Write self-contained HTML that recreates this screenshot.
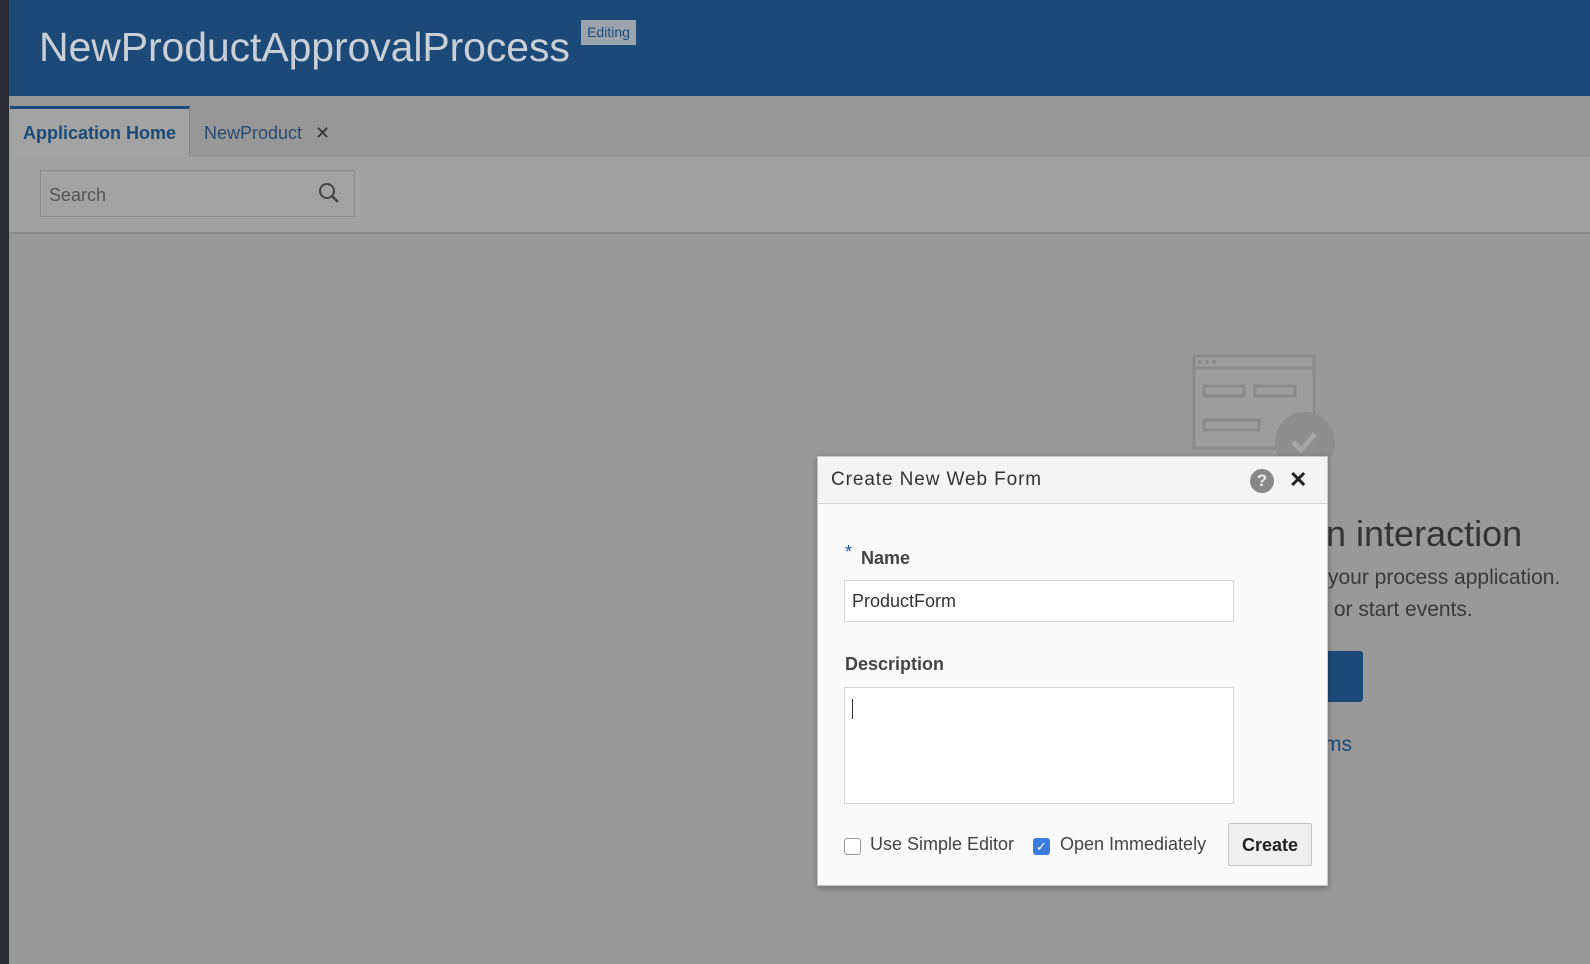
<!DOCTYPE html>
<html><head><meta charset="utf-8"><style>
*{margin:0;padding:0;box-sizing:border-box}
body{width:1590px;height:964px;overflow:hidden;background:#999;font-family:"Liberation Sans",sans-serif;position:relative}
.a{position:absolute}
</style></head><body>
<div class="a" style="left:0;top:0;width:9px;height:964px;background:#2a2a33"></div>
<div class="a" style="left:9px;top:0;width:1581px;height:96px;background:#1c4a78"></div>
<div class="a" style="left:39px;top:24px;font-size:41px;color:#c9cfd6;letter-spacing:-0.1px">NewProductApprovalProcess</div>
<div class="a" style="left:581px;top:20px;width:55px;height:25px;background:#9ba4ad;color:#1c4a78;font-size:14px;text-align:center;line-height:25px">Editing</div>
<div class="a" style="left:9px;top:96px;width:1581px;height:61px;background:#979797"></div>
<div class="a" style="left:10px;top:106px;width:180px;height:51px;background:#a3a3a3;border-top:3px solid #1c4a78;border-right:1px solid #888"></div>
<div class="a" style="left:23px;top:123px;font-size:18px;font-weight:bold;color:#1c4a78">Application Home</div>
<div class="a" style="left:204px;top:123px;font-size:18px;color:#2a4a70">NewProduct <span style="margin-left:8px;color:#333">✕</span></div>
<div class="a" style="left:9px;top:157px;width:1581px;height:77px;background:#a2a2a2;border-bottom:2px solid #8a8a8a"></div>
<div class="a" style="left:40px;top:170px;width:315px;height:47px;border:1px solid #8d8d8d;background:#a3a3a3"></div>
<div class="a" style="left:49px;top:185px;font-size:18px;color:#555">Search</div>
<svg class="a" style="left:317px;top:181px" width="24" height="24" viewBox="0 0 24 24"><circle cx="10" cy="10" r="7" fill="none" stroke="#444" stroke-width="2"/><path d="M15 15l6 6" stroke="#444" stroke-width="2.5"/></svg>
<svg class="a" style="left:1190px;top:354px" width="150" height="110" viewBox="0 0 150 110">
<rect x="4" y="2" width="120" height="92" fill="#9d9d9d" stroke="#8a8a8a" stroke-width="3"/>
<line x1="4" y1="14" x2="124" y2="14" stroke="#8a8a8a" stroke-width="3"/>
<circle cx="10" cy="8" r="2" fill="#8a8a8a"/><circle cx="17" cy="8" r="2" fill="#8a8a8a"/><circle cx="24" cy="8" r="2" fill="#8a8a8a"/>
<rect x="14" y="32" width="40" height="10" fill="none" stroke="#8a8a8a" stroke-width="3"/><rect x="65" y="32" width="40" height="10" fill="none" stroke="#8a8a8a" stroke-width="3"/>
<rect x="14" y="66" width="55" height="10" fill="none" stroke="#8a8a8a" stroke-width="3"/>
<circle cx="115" cy="88" r="30" fill="#8e8e8e"/>
<path d="M103 88l8 8 14-16" fill="none" stroke="#a5a5a5" stroke-width="5"/>
</svg>
<div class="a" style="left:1326px;top:513px;font-size:36px;color:#333">n interaction</div>
<div class="a" style="left:1328px;top:562px;font-size:21px;color:#3a3a3a;line-height:32px">your process application.<br>&nbsp;or start events.</div>
<div class="a" style="left:1300px;top:651px;width:63px;height:51px;background:#1c4a78;border-radius:3px"></div>
<div class="a" style="left:1317px;top:733px;font-size:21px;color:#1c4a78">rms</div>
<div class="a" style="left:817px;top:456px;width:511px;height:430px;background:#fafafa;border:1px solid #c8c8c8;box-shadow:0 2px 6px rgba(0,0,0,.3)"></div>
<div class="a" style="left:818px;top:457px;width:509px;height:47px;background:#f4f4f4;border-bottom:1px solid #d4d4d4"></div>
<div class="a" style="left:831px;top:469px;font-size:19px;color:#333;letter-spacing:.9px">Create New Web Form</div>
<div class="a" style="left:1250px;top:469px;width:24px;height:24px;border-radius:50%;background:#888;color:#eee;font-size:17px;font-weight:bold;text-align:center;line-height:24px">?</div>
<div class="a" style="left:1289px;top:467px;font-size:22px;font-weight:bold;color:#222">✕</div>
<div class="a" style="left:845px;top:542px;font-size:18px;color:#1c5aa0">*</div>
<div class="a" style="left:861px;top:548px;font-size:18px;font-weight:bold;color:#444">Name</div>
<div class="a" style="left:844px;top:580px;width:390px;height:42px;background:#fff;border:1px solid #d6d6d6"></div>
<div class="a" style="left:852px;top:591px;font-size:18px;color:#333">ProductForm</div>
<div class="a" style="left:845px;top:654px;font-size:18px;font-weight:bold;color:#444">Description</div>
<div class="a" style="left:844px;top:687px;width:390px;height:117px;background:#fff;border:1px solid #d6d6d6"></div>
<div class="a" style="left:852px;top:699px;width:1px;height:20px;background:#333"></div>
<div class="a" style="left:844px;top:838px;width:17px;height:17px;border:1px solid #999;border-radius:3px;background:#fff"></div>
<div class="a" style="left:870px;top:834px;font-size:18px;color:#444">Use Simple Editor</div>
<div class="a" style="left:1033px;top:838px;width:17px;height:17px;border-radius:3px;background:#3b7ddd;color:#fff;font-size:13px;text-align:center;line-height:17px">✓</div>
<div class="a" style="left:1060px;top:834px;font-size:18px;color:#444">Open Immediately</div>
<div class="a" style="left:1228px;top:823px;width:84px;height:43px;background:#efefef;border:1px solid #c4c4c4;border-radius:2px;font-size:18px;font-weight:bold;color:#222;text-align:center;line-height:43px">Create</div>
</body></html>
